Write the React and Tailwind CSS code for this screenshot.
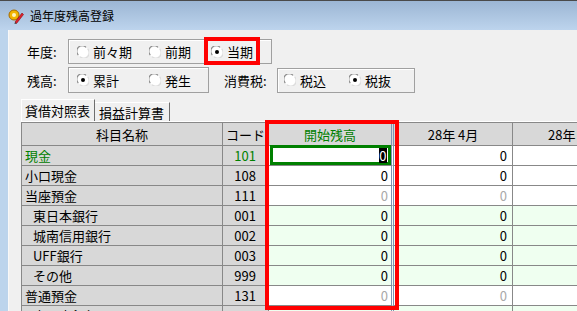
import React from 'react';

const Radio = ({ checked }) => (
  <svg width="12" height="12" viewBox="0 0 12 12" className="shrink-0">
    <circle cx="6" cy="6" r="5.5" fill="#fff" />
    <path d="M1.3 9 A5.2 5.2 0 0 1 9 1.3" fill="none" stroke="#8a8a8a" strokeWidth="1.2" />
    <path d="M10.7 3 A5.2 5.2 0 0 1 3 10.7" fill="none" stroke="#dcdcdc" strokeWidth="1.2" />
    {checked && <circle cx="6" cy="6" r="2" fill="#000" />}
  </svg>
);

const Option = ({ label, checked, w }) => (
  <div className={`flex items-center gap-[4px] ${w}`}>
    <Radio checked={checked} />
    <span className="text-[13px] leading-none">{label}</span>
  </div>
);

const rows = [
  { name: '現金', code: '101', green: true, selected: true, bg: 'white', zero: 'black' },
  { name: '小口現金', code: '108', bg: 'white', zero: 'black' },
  { name: '当座預金', code: '111', bg: 'white', zero: 'gray' },
  { name: '東日本銀行', code: '001', indent: true, bg: 'mint', zero: 'black' },
  { name: '城南信用銀行', code: '002', indent: true, bg: 'mint', zero: 'black' },
  { name: 'UFF銀行', code: '003', indent: true, bg: 'mint', zero: 'black' },
  { name: 'その他', code: '999', indent: true, bg: 'mint', zero: 'black' },
  { name: '普通預金', code: '131', bg: 'white', zero: 'gray' },
  { name: '東日本銀行', code: '001', indent: true, bg: 'mint', zero: 'black' },
];

const App = () => {
  return (
    <div
      className="relative w-[577px] h-[311px] overflow-hidden flex flex-col bg-[#b9d1ea] text-black"
      style={{ fontFamily: "'Noto Sans CJK JP', 'Noto Sans', sans-serif" }}
    >
      {/* Title bar */}
      <div className="h-[30px] shrink-0 border-t border-[#4a4a4a] bg-gradient-to-b from-[#9cb6d4] to-[#bdd4ed] flex items-center pl-[8px] gap-[6px]">
        <svg width="16" height="16" viewBox="0 0 16 16">
          <circle cx="6" cy="7" r="5" fill="#f2b400" stroke="#a66a00" strokeWidth="1" />
          <circle cx="6" cy="7" r="2" fill="#fff3c0" />
          <path d="M7 14 L14 5 L15.5 6.5 L8.5 15.5 Z" fill="#e0202a" stroke="#8a0a10" strokeWidth="0.6" />
          <path d="M7 14 L6.5 16 L8.5 15.5 Z" fill="#333" />
        </svg>
        <span className="text-[12px] leading-none">過年度残高登録</span>
      </div>

      {/* Body */}
      <div className="flex-1 flex min-h-0">
        <div className="w-[8px] shrink-0 bg-[#bcd4ec]" />
        <div className="flex-1 min-w-0 bg-[#f0f0f0] border-l border-[#f8f8f8] pt-[9px] pl-[12px] flex flex-col">
          {/* Row 1 */}
          <div className="flex items-center h-[25px] ml-[6px]">
            <span className="w-[41px] text-[13px] leading-none">年度:</span>
            <div className="w-[204px] h-[25px] border border-[#a0a0a0] shadow-[inset_1px_1px_0_#fff] flex items-center pl-[8px]">
              <Option label="前々期" w="w-[72px]" />
              <Option label="前期" w="w-[62px]" />
              <Option label="当期" checked />
            </div>
          </div>

          {/* Row 2 */}
          <div className="flex items-center h-[26px] mt-[3px] ml-[6px]">
            <span className="w-[41px] text-[13px] leading-none">残高:</span>
            <div className="w-[141px] h-[26px] border border-[#a0a0a0] shadow-[inset_1px_1px_0_#fff] flex items-center pl-[8px]">
              <Option label="累計" checked w="w-[72px]" />
              <Option label="発生" />
            </div>
            <span className="ml-[15px] w-[53px] text-[13px] leading-none">消費税:</span>
            <div className="w-[138px] h-[25px] border border-[#a0a0a0] shadow-[inset_1px_1px_0_#fff] flex items-center pl-[6px]">
              <Option label="税込" w="w-[65px]" />
              <Option label="税抜" checked />
            </div>
          </div>

          {/* Tabs */}
          <div className="flex items-end h-[22px] mt-[6px]">
            <div className="h-[22px] border-l border-t border-white border-r border-r-[#6e6e6e] pl-[3px] pr-[4px] flex items-center text-[13px] leading-none bg-[#f0f0f0]">
              貸借対照表
            </div>
            <div className="h-[19px] border-t border-white border-r border-r-[#6e6e6e] pl-[4px] pr-[5px] flex items-center text-[13px] leading-none">
              損益計算書
            </div>
          </div>

          {/* Grid */}
          <div className="flex-1 min-h-0 border-t border-white overflow-hidden">
            <div className="grid grid-cols-[201px_46px_125px_119px_120px] w-max border-t border-l border-[#888] text-[13px] leading-none">
              {/* Header */}
              <div className="h-[23px] bg-[#d8d8d8] border-r border-b border-[#888] flex items-center justify-center">科目名称</div>
              <div className="h-[23px] bg-[#d8d8d8] border-r border-b border-[#888] flex items-center justify-center">コード</div>
              <div className="h-[23px] bg-[#d8d8d8] border-b border-[#888] border-r-[3px] border-r-[#7d93b4] border-double flex items-center justify-center text-[#008000]">開始残高</div>
              <div className="h-[23px] bg-[#d8d8d8] border-r border-b border-[#888] flex items-center justify-center">28年 4月</div>
              <div className="h-[23px] bg-[#d8d8d8] border-r border-b border-[#888] flex items-center pl-[35px]">28年 5月</div>

              {rows.map((r, i) => {
                const bg = r.bg === 'mint' ? 'bg-[#effff0]' : 'bg-white';
                const zc = r.zero === 'gray' ? 'text-[#a8a8a8]' : 'text-black';
                return (
                  <React.Fragment key={i}>
                    <div className={`h-[20px] bg-[#d8d8d8] border-r border-b border-[#888] flex items-center ${r.indent ? 'pl-[11px]' : 'pl-[3px]'} ${r.green ? 'text-[#008000]' : ''}`}>
                      {r.name}
                    </div>
                    <div className={`h-[20px] bg-[#d8d8d8] border-r border-b border-[#888] flex items-center justify-end pr-[12px] ${r.green ? 'text-[#008000]' : ''}`}>
                      {r.code}
                    </div>
                    <div className={`relative h-[20px] ${bg} border-b border-[#888] border-r-[3px] border-r-[#7d93b4] border-double flex items-center justify-end pr-[3px] ${zc}`}>
                      {r.selected ? (
                        <>
                          <div className="absolute -top-[1px] left-[1px] right-0 bottom-0 border-[3px] border-[#008000]" />
                          <span className="relative bg-black text-white px-[0.5px] py-[1px] mr-[1px]">0</span>
                        </>
                      ) : (
                        '0'
                      )}
                    </div>
                    <div className={`h-[20px] ${bg} border-r border-b border-[#888] flex items-center justify-end pr-[5px] ${zc}`}>0</div>
                    <div className={`h-[20px] ${bg} border-r border-b border-[#888] flex items-center justify-end pr-[5px] ${zc}`}>0</div>
                  </React.Fragment>
                );
              })}
            </div>
          </div>
        </div>
      </div>

      {/* Red annotation boxes */}
      <div className="absolute left-[204px] top-[37px] w-[56px] h-[28px] border-4 border-[#f00]" />
      <div className="absolute left-[265px] top-[120px] w-[134px] h-[190px] border-4 border-[#f00]" />
    </div>
  );
};

export default App;
